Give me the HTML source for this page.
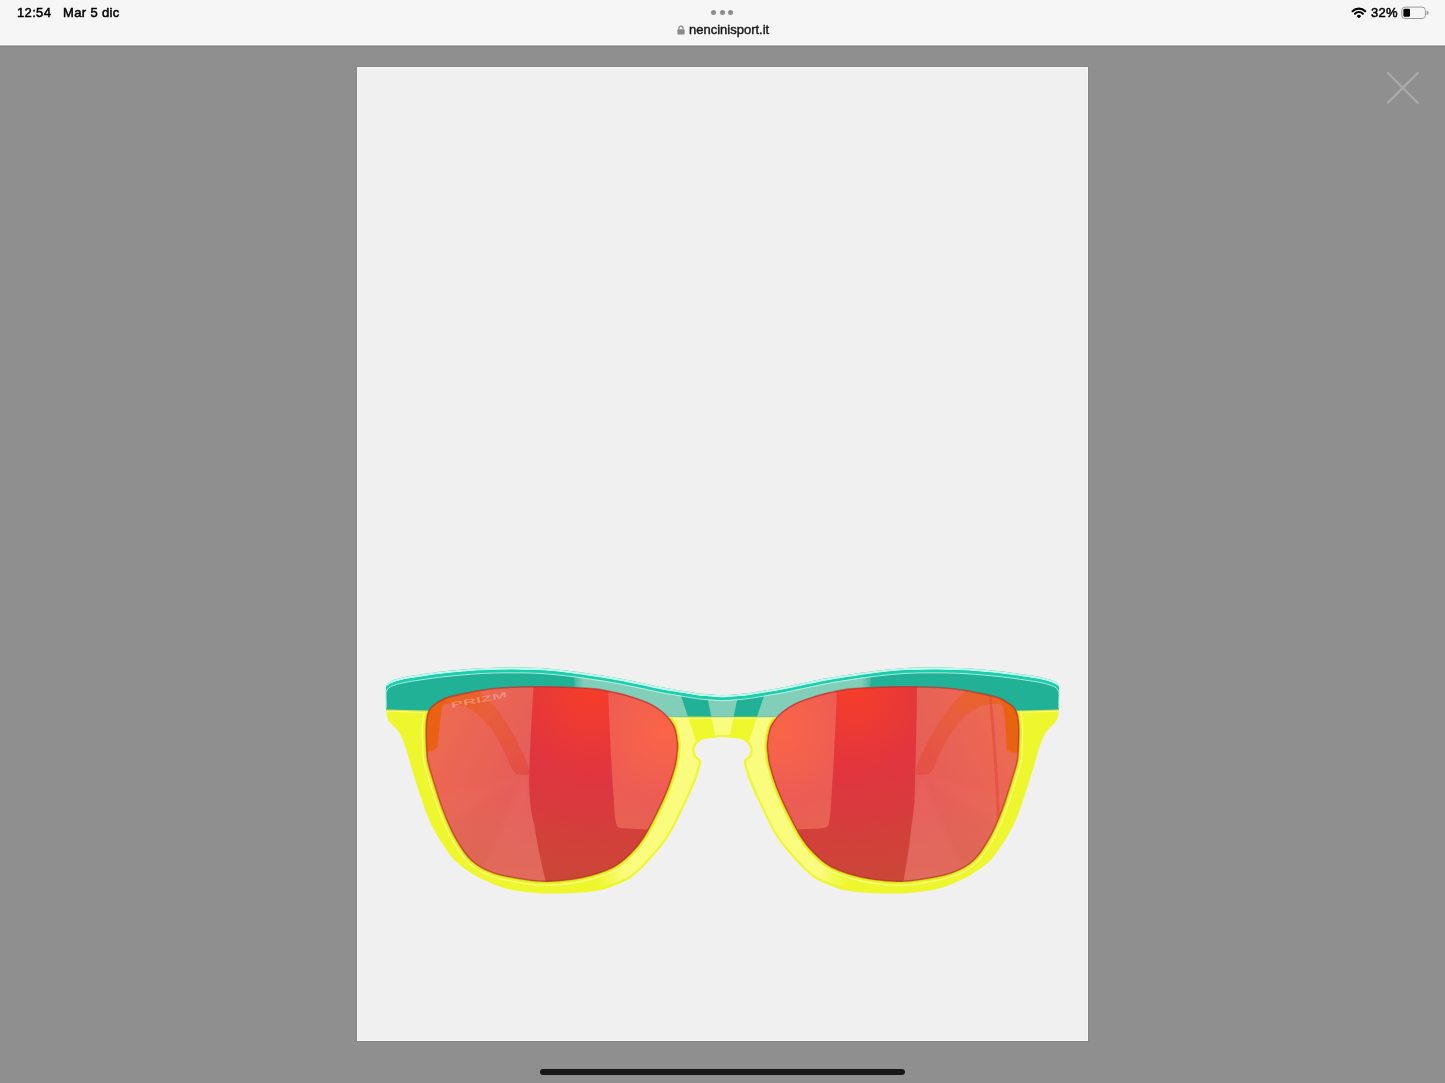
<!DOCTYPE html>
<html><head><meta charset="utf-8">
<style>
html,body{margin:0;padding:0;width:1445px;height:1083px;overflow:hidden;background:#8f8f8f;font-family:"Liberation Sans",sans-serif;}
.st,#url{will-change:transform;}
#bar{position:absolute;left:0;top:0;width:1445px;height:44px;background:#f6f6f6;border-bottom:1px solid #fdfdfd;}
#shadow{position:absolute;left:0;top:45px;width:1445px;height:2px;background:linear-gradient(#b4b4b4 0,#b4b4b4 50%,#838383 50%,#838383 100%);}
.st{position:absolute;top:5px;font-size:13px;color:#000;line-height:16px;letter-spacing:0.35px;-webkit-text-stroke:0.5px #000;}
#time{left:17px;}
#date{left:62.5px;}
#url{position:absolute;left:689px;top:22px;font-size:13px;color:#1a1a1a;line-height:16px;-webkit-text-stroke:0.4px #111;}
#dots{position:absolute;left:711px;top:10px;}
#dots i{position:absolute;top:0;width:5px;height:5px;border-radius:50%;background:#8d8d8d;}
#card{position:absolute;left:357px;top:67px;width:731px;height:974px;background:#f0f0f0;box-shadow:0 0 0 1px #878787, inset 0 0 0 1px #f6f6f6;}
#home{position:absolute;left:540px;top:1069px;width:365px;height:6px;border-radius:3px;background:#171717;}
</style></head><body>
<div id="bar"></div>
<div id="shadow"></div>
<div class="st" id="time">12:54</div>
<div class="st" id="date">Mar 5 dic</div>
<div id="dots"><i style="left:0"></i><i style="left:8.6px"></i><i style="left:17.2px"></i></div>
<svg width="8" height="10" style="position:absolute;left:677px;top:25px" viewBox="0 0 8 10"><path d="M1.9,4.6V3.2a2.1,2.1 0 0 1 4.2,0v1.4" fill="none" stroke="#8a8a8a" stroke-width="1.2"/><rect x="0.4" y="4.3" width="7.2" height="5.3" rx="0.9" fill="#8a8a8a"/></svg>
<div id="url">nencinisport.it</div>
<div class="st" id="pct" style="left:1371px;letter-spacing:0.3px">32%</div>
<svg width="1445" height="120" style="position:absolute;left:0;top:0" viewBox="0 0 1445 120">
  <path d="M1352.54,11.24 A9,9 0 0 1 1365.26,11.24" fill="none" stroke="#000" stroke-width="2.1" stroke-linecap="round"/>
 <path d="M1354.94,13.64 A5.6,5.6 0 0 1 1362.86,13.64" fill="none" stroke="#000" stroke-width="2.1" stroke-linecap="round"/>
 <path d="M1358.9,18 L1356.9,16 A2.8,2.8 0 0 1 1360.9,16Z" fill="#000" stroke="#000" stroke-width="0.6" stroke-linejoin="round"/>
 <rect x="1401.8" y="7.1" width="23.6" height="11.4" rx="3.2" fill="none" stroke="#9a9a9a" stroke-width="1"/>
 <rect x="1403.4" y="8.8" width="6.6" height="8" rx="1.4" fill="#000"/>
 <path d="M1426.6,10.8 A2,2 0 0 1 1426.6,15" fill="#a0a0a0"/>
 <path d="M1388,73 L1417.6,102.6 M1417.6,73 L1388,102.6" stroke="#aaaaaa" stroke-width="2.2" stroke-linecap="round"/>
</svg>
<div id="card"></div>
<svg width="1445" height="1083" viewBox="0 0 1445 1083" style="position:absolute;left:0;top:0">
<defs>
 <clipPath id="clL"><path d="M427.60,715.00 C428.45,711.43 429.30,709.90 431.30,707.60 C433.30,705.30 436.67,702.97 439.60,701.20 C442.53,699.43 444.28,698.38 448.90,697.00 C453.52,695.62 462.12,693.98 467.30,692.90 C472.48,691.82 474.55,691.32 480.00,690.50 C485.45,689.68 490.67,688.62 500.00,688.00 C509.33,687.38 525.17,686.93 536.00,686.80 C546.83,686.67 555.23,686.85 565.00,687.20 C574.77,687.55 586.27,688.00 594.60,688.90 C602.93,689.80 608.60,691.17 615.00,692.60 C621.40,694.03 627.17,695.60 633.00,697.50 C638.83,699.40 645.10,701.58 650.00,704.00 C654.90,706.42 659.07,709.33 662.40,712.00 C665.73,714.67 667.90,717.17 670.00,720.00 C672.10,722.83 673.75,725.00 675.00,729.00 C676.25,733.00 677.20,739.67 677.50,744.00 C677.80,748.33 677.22,751.33 676.80,755.00 C676.38,758.67 676.47,760.50 675.00,766.00 C673.53,771.50 671.00,780.25 668.00,788.00 C665.00,795.75 660.92,804.50 657.00,812.50 C653.08,820.50 648.67,829.42 644.50,836.00 C640.33,842.58 637.18,846.83 632.00,852.00 C626.82,857.17 621.73,862.75 613.40,867.00 C605.07,871.25 592.57,875.13 582.00,877.50 C571.43,879.87 558.92,880.78 550.00,881.20 C541.08,881.62 537.83,881.37 528.50,880.00 C519.17,878.63 503.47,876.25 494.00,873.00 C484.53,869.75 478.20,866.50 471.70,860.50 C465.20,854.50 459.85,845.58 455.00,837.00 C450.15,828.42 446.52,819.40 442.60,809.00 C438.68,798.60 434.00,782.77 431.50,774.60 C429.00,766.43 428.43,765.10 427.60,760.00 C426.77,754.90 426.73,749.17 426.50,744.00 C426.27,738.83 426.02,733.83 426.20,729.00 C426.38,724.17 426.75,718.57 427.60,715.00Z"/></clipPath>
 <clipPath id="clRR"><path d="M1017.40,715.00 C1016.55,711.43 1015.70,709.90 1013.70,707.60 C1011.70,705.30 1008.33,702.97 1005.40,701.20 C1002.47,699.43 1000.72,698.38 996.10,697.00 C991.48,695.62 982.88,693.98 977.70,692.90 C972.52,691.82 970.45,691.32 965.00,690.50 C959.55,689.68 954.33,688.62 945.00,688.00 C935.67,687.38 919.83,686.93 909.00,686.80 C898.17,686.67 889.77,686.85 880.00,687.20 C870.23,687.55 858.73,688.00 850.40,688.90 C842.07,689.80 836.40,691.17 830.00,692.60 C823.60,694.03 817.83,695.60 812.00,697.50 C806.17,699.40 799.90,701.58 795.00,704.00 C790.10,706.42 785.93,709.33 782.60,712.00 C779.27,714.67 777.10,717.17 775.00,720.00 C772.90,722.83 771.25,725.00 770.00,729.00 C768.75,733.00 767.80,739.67 767.50,744.00 C767.20,748.33 767.78,751.33 768.20,755.00 C768.62,758.67 768.53,760.50 770.00,766.00 C771.47,771.50 774.00,780.25 777.00,788.00 C780.00,795.75 784.08,804.50 788.00,812.50 C791.92,820.50 796.33,829.42 800.50,836.00 C804.67,842.58 807.82,846.83 813.00,852.00 C818.18,857.17 823.27,862.75 831.60,867.00 C839.93,871.25 852.43,875.13 863.00,877.50 C873.57,879.87 886.08,880.78 895.00,881.20 C903.92,881.62 907.17,881.37 916.50,880.00 C925.83,878.63 941.53,876.25 951.00,873.00 C960.47,869.75 966.80,866.50 973.30,860.50 C979.80,854.50 985.15,845.58 990.00,837.00 C994.85,828.42 998.48,819.40 1002.40,809.00 C1006.32,798.60 1011.00,782.77 1013.50,774.60 C1016.00,766.43 1016.57,765.10 1017.40,760.00 C1018.23,754.90 1018.27,749.17 1018.50,744.00 C1018.73,738.83 1018.98,733.83 1018.80,729.00 C1018.62,724.17 1018.25,718.57 1017.40,715.00Z"/></clipPath>
 <clipPath id="clY"><path d="M370,711 L668,718 L777,718 L1075,711 L1075,910 L370,910Z"/></clipPath>
 <clipPath id="clLow"><path d="M370,704 L668,711 L777,711 L1075,704 L1075,910 L370,910Z"/></clipPath>
 <clipPath id="clF"><path d="M386.00,686.50 C386.57,683.88 387.50,683.45 389.00,682.30 C390.50,681.15 392.33,680.48 395.00,679.60 C397.67,678.72 400.83,677.83 405.00,677.00 C409.17,676.17 413.33,675.57 420.00,674.60 C426.67,673.63 435.00,672.27 445.00,671.20 C455.00,670.13 469.17,668.83 480.00,668.20 C490.83,667.57 500.00,667.43 510.00,667.40 C520.00,667.37 530.00,667.42 540.00,668.00 C550.00,668.58 560.00,669.70 570.00,670.90 C580.00,672.10 591.67,673.92 600.00,675.20 C608.33,676.48 612.67,677.20 620.00,678.60 C627.33,680.00 637.33,682.20 644.00,683.60 C650.67,685.00 652.67,685.63 660.00,687.00 C667.33,688.37 681.33,690.70 688.00,691.80 C694.67,692.90 694.25,693.03 700.00,693.60 C705.75,694.17 715.00,695.20 722.50,695.20 C730.00,695.20 739.25,694.17 745.00,693.60 C750.75,693.03 750.33,692.90 757.00,691.80 C763.67,690.70 777.67,688.37 785.00,687.00 C792.33,685.63 794.33,685.00 801.00,683.60 C807.67,682.20 817.67,680.00 825.00,678.60 C832.33,677.20 836.67,676.48 845.00,675.20 C853.33,673.92 865.00,672.10 875.00,670.90 C885.00,669.70 895.00,668.58 905.00,668.00 C915.00,667.42 925.00,667.37 935.00,667.40 C945.00,667.43 954.17,667.57 965.00,668.20 C975.83,668.83 990.00,670.13 1000.00,671.20 C1010.00,672.27 1018.33,673.63 1025.00,674.60 C1031.67,675.57 1035.83,676.17 1040.00,677.00 C1044.17,677.83 1047.33,678.72 1050.00,679.60 C1052.67,680.48 1054.50,681.15 1056.00,682.30 C1057.50,683.45 1058.43,683.88 1059.00,686.50 C1059.57,689.12 1059.43,694.25 1059.40,698.00 C1059.37,701.75 1058.97,706.67 1058.80,709.00 C1058.63,711.33 1058.58,710.50 1058.40,712.00 C1058.22,713.50 1058.27,716.25 1057.70,718.00 C1057.13,719.75 1056.45,720.75 1055.00,722.50 C1053.55,724.25 1050.77,726.42 1049.00,728.50 C1047.23,730.58 1045.73,732.58 1044.40,735.00 C1043.07,737.42 1042.03,740.33 1041.00,743.00 C1039.97,745.67 1039.07,748.25 1038.20,751.00 C1037.33,753.75 1036.70,756.33 1035.80,759.50 C1034.90,762.67 1034.65,764.02 1032.80,770.00 C1030.95,775.98 1027.58,786.93 1024.70,795.40 C1021.82,803.87 1018.88,813.18 1015.50,820.80 C1012.12,828.42 1008.45,834.67 1004.40,841.10 C1000.35,847.53 995.93,854.32 991.20,859.40 C986.47,864.48 980.58,868.38 976.00,871.60 C971.42,874.82 969.70,875.93 963.70,878.70 C957.70,881.47 948.12,885.92 940.00,888.20 C931.88,890.48 923.33,891.50 915.00,892.40 C906.67,893.30 898.33,893.53 890.00,893.60 C881.67,893.67 872.50,893.35 865.00,892.80 C857.50,892.25 850.33,891.33 845.00,890.30 C839.67,889.27 838.33,888.82 833.00,886.60 C827.67,884.38 819.50,881.68 813.00,877.00 C806.50,872.32 800.25,865.50 794.00,858.50 C787.75,851.50 781.50,844.75 775.50,835.00 C769.50,825.25 762.42,809.17 758.00,800.00 C753.58,790.83 750.88,784.57 749.00,780.00 C747.12,775.43 747.45,774.93 746.70,772.60 C745.95,770.27 744.95,767.83 744.50,766.00 C744.05,764.17 743.88,762.72 744.00,761.60 C744.12,760.48 744.37,760.30 745.20,759.30 C746.03,758.30 748.13,756.88 749.00,755.60 C749.87,754.32 750.23,752.95 750.40,751.60 C750.57,750.25 750.62,749.07 750.00,747.50 C749.38,745.93 748.35,743.65 746.70,742.20 C745.05,740.75 743.52,739.63 740.10,738.80 C736.68,737.97 729.13,737.48 726.20,737.20 C723.27,736.92 723.73,737.10 722.50,737.10 C721.27,737.10 721.73,736.92 718.80,737.20 C715.87,737.48 708.32,737.97 704.90,738.80 C701.48,739.63 699.95,740.75 698.30,742.20 C696.65,743.65 695.62,745.93 695.00,747.50 C694.38,749.07 694.43,750.25 694.60,751.60 C694.77,752.95 695.13,754.32 696.00,755.60 C696.87,756.88 698.97,758.30 699.80,759.30 C700.63,760.30 700.88,760.48 701.00,761.60 C701.12,762.72 700.95,764.17 700.50,766.00 C700.05,767.83 699.05,770.27 698.30,772.60 C697.55,774.93 697.88,775.43 696.00,780.00 C694.12,784.57 691.42,790.83 687.00,800.00 C682.58,809.17 675.50,825.25 669.50,835.00 C663.50,844.75 657.25,851.50 651.00,858.50 C644.75,865.50 638.50,872.32 632.00,877.00 C625.50,881.68 617.33,884.38 612.00,886.60 C606.67,888.82 605.33,889.27 600.00,890.30 C594.67,891.33 587.50,892.25 580.00,892.80 C572.50,893.35 563.33,893.67 555.00,893.60 C546.67,893.53 538.33,893.30 530.00,892.40 C521.67,891.50 513.12,890.48 505.00,888.20 C496.88,885.92 487.30,881.47 481.30,878.70 C475.30,875.93 473.58,874.82 469.00,871.60 C464.42,868.38 458.53,864.48 453.80,859.40 C449.07,854.32 444.65,847.53 440.60,841.10 C436.55,834.67 432.88,828.42 429.50,820.80 C426.12,813.18 423.18,803.87 420.30,795.40 C417.42,786.93 414.05,775.98 412.20,770.00 C410.35,764.02 410.10,762.67 409.20,759.50 C408.30,756.33 407.67,753.75 406.80,751.00 C405.93,748.25 405.03,745.67 404.00,743.00 C402.97,740.33 401.93,737.42 400.60,735.00 C399.27,732.58 397.77,730.58 396.00,728.50 C394.23,726.42 391.45,724.25 390.00,722.50 C388.55,720.75 387.87,719.75 387.30,718.00 C386.73,716.25 386.78,713.50 386.60,712.00 C386.42,710.50 386.37,711.33 386.20,709.00 C386.03,706.67 385.63,701.75 385.60,698.00 C385.57,694.25 385.43,689.12 386.00,686.50Z"/></clipPath>
 <clipPath id="clB"><path d="M386.00,686.50 C386.50,685.80 387.50,683.45 389.00,682.30 C390.50,681.15 392.33,680.48 395.00,679.60 C397.67,678.72 400.83,677.83 405.00,677.00 C409.17,676.17 413.33,675.57 420.00,674.60 C426.67,673.63 435.00,672.27 445.00,671.20 C455.00,670.13 469.17,668.83 480.00,668.20 C490.83,667.57 500.00,667.43 510.00,667.40 C520.00,667.37 530.00,667.42 540.00,668.00 C550.00,668.58 560.00,669.70 570.00,670.90 C580.00,672.10 591.67,673.92 600.00,675.20 C608.33,676.48 612.67,677.20 620.00,678.60 C627.33,680.00 637.33,682.20 644.00,683.60 C650.67,685.00 652.67,685.63 660.00,687.00 C667.33,688.37 681.33,690.70 688.00,691.80 C694.67,692.90 694.25,693.03 700.00,693.60 C705.75,694.17 715.00,695.20 722.50,695.20 C730.00,695.20 739.25,694.17 745.00,693.60 C750.75,693.03 750.33,692.90 757.00,691.80 C763.67,690.70 777.67,688.37 785.00,687.00 C792.33,685.63 794.33,685.00 801.00,683.60 C807.67,682.20 817.67,680.00 825.00,678.60 C832.33,677.20 836.67,676.48 845.00,675.20 C853.33,673.92 865.00,672.10 875.00,670.90 C885.00,669.70 895.00,668.58 905.00,668.00 C915.00,667.42 925.00,667.37 935.00,667.40 C945.00,667.43 954.17,667.57 965.00,668.20 C975.83,668.83 990.00,670.13 1000.00,671.20 C1010.00,672.27 1018.33,673.63 1025.00,674.60 C1031.67,675.57 1035.83,676.17 1040.00,677.00 C1044.17,677.83 1047.33,678.72 1050.00,679.60 C1052.67,680.48 1054.50,681.15 1056.00,682.30 C1057.50,683.45 1058.50,685.80 1059.00,686.50 L1058.8,709.6 L777,716.6 L722.5,716.8 L668,716.6 L386.2,709.6Z"/></clipPath>
 <filter id="blur2" x="-20%" y="-20%" width="140%" height="140%"><feGaussianBlur stdDeviation="2.5"/></filter>
 <linearGradient id="gBase" gradientUnits="userSpaceOnUse" x1="430" y1="730" x2="545" y2="790">
  <stop offset="0" stop-color="#ed6b50"/><stop offset="1" stop-color="#e45a5b"/>
 </linearGradient>
 <linearGradient id="gBot" gradientUnits="userSpaceOnUse" x1="0" y1="790" x2="0" y2="885">
  <stop offset="0" stop-color="#da6e56" stop-opacity="0"/><stop offset="1" stop-color="#d86e55" stop-opacity="0.75"/>
 </linearGradient>
 <radialGradient id="gDark" gradientUnits="userSpaceOnUse" cx="592" cy="690" r="200">
  <stop offset="0" stop-color="#f63d2a"/><stop offset="0.45" stop-color="#df3540"/><stop offset="1" stop-color="#c94836"/>
 </radialGradient>
 <radialGradient id="gLight" gradientUnits="userSpaceOnUse" cx="665" cy="730" r="120">
  <stop offset="0" stop-color="#fa6547"/><stop offset="0.6" stop-color="#ec5c54"/><stop offset="1" stop-color="#e46452"/>
 </radialGradient>
 <linearGradient id="gTeal" gradientUnits="userSpaceOnUse" x1="570" y1="0" x2="584" y2="0">
  <stop offset="0" stop-color="#82cfb9" stop-opacity="0"/><stop offset="1" stop-color="#82cfb9"/>
 </linearGradient>
 <linearGradient id="gTealR" gradientUnits="userSpaceOnUse" x1="875" y1="0" x2="861" y2="0">
  <stop offset="0" stop-color="#82cfb9" stop-opacity="0"/><stop offset="1" stop-color="#82cfb9"/>
 </linearGradient>
 <linearGradient id="gTemple" gradientUnits="userSpaceOnUse" x1="460" y1="690" x2="525" y2="775">
  <stop offset="0" stop-color="#e8600c"/><stop offset="0.35" stop-color="#e85a30"/><stop offset="1" stop-color="#e0473f"/>
 </linearGradient>
 <linearGradient id="gLY" gradientUnits="userSpaceOnUse" x1="598" y1="0" x2="625" y2="0">
  <stop offset="0" stop-color="#f9fc7c" stop-opacity="0"/><stop offset="1" stop-color="#f9fc7c"/>
 </linearGradient>
</defs>
<path d="M386.00,686.50 C386.57,683.88 387.50,683.45 389.00,682.30 C390.50,681.15 392.33,680.48 395.00,679.60 C397.67,678.72 400.83,677.83 405.00,677.00 C409.17,676.17 413.33,675.57 420.00,674.60 C426.67,673.63 435.00,672.27 445.00,671.20 C455.00,670.13 469.17,668.83 480.00,668.20 C490.83,667.57 500.00,667.43 510.00,667.40 C520.00,667.37 530.00,667.42 540.00,668.00 C550.00,668.58 560.00,669.70 570.00,670.90 C580.00,672.10 591.67,673.92 600.00,675.20 C608.33,676.48 612.67,677.20 620.00,678.60 C627.33,680.00 637.33,682.20 644.00,683.60 C650.67,685.00 652.67,685.63 660.00,687.00 C667.33,688.37 681.33,690.70 688.00,691.80 C694.67,692.90 694.25,693.03 700.00,693.60 C705.75,694.17 715.00,695.20 722.50,695.20 C730.00,695.20 739.25,694.17 745.00,693.60 C750.75,693.03 750.33,692.90 757.00,691.80 C763.67,690.70 777.67,688.37 785.00,687.00 C792.33,685.63 794.33,685.00 801.00,683.60 C807.67,682.20 817.67,680.00 825.00,678.60 C832.33,677.20 836.67,676.48 845.00,675.20 C853.33,673.92 865.00,672.10 875.00,670.90 C885.00,669.70 895.00,668.58 905.00,668.00 C915.00,667.42 925.00,667.37 935.00,667.40 C945.00,667.43 954.17,667.57 965.00,668.20 C975.83,668.83 990.00,670.13 1000.00,671.20 C1010.00,672.27 1018.33,673.63 1025.00,674.60 C1031.67,675.57 1035.83,676.17 1040.00,677.00 C1044.17,677.83 1047.33,678.72 1050.00,679.60 C1052.67,680.48 1054.50,681.15 1056.00,682.30 C1057.50,683.45 1058.43,683.88 1059.00,686.50 C1059.57,689.12 1059.43,694.25 1059.40,698.00 C1059.37,701.75 1058.97,706.67 1058.80,709.00 C1058.63,711.33 1058.58,710.50 1058.40,712.00 C1058.22,713.50 1058.27,716.25 1057.70,718.00 C1057.13,719.75 1056.45,720.75 1055.00,722.50 C1053.55,724.25 1050.77,726.42 1049.00,728.50 C1047.23,730.58 1045.73,732.58 1044.40,735.00 C1043.07,737.42 1042.03,740.33 1041.00,743.00 C1039.97,745.67 1039.07,748.25 1038.20,751.00 C1037.33,753.75 1036.70,756.33 1035.80,759.50 C1034.90,762.67 1034.65,764.02 1032.80,770.00 C1030.95,775.98 1027.58,786.93 1024.70,795.40 C1021.82,803.87 1018.88,813.18 1015.50,820.80 C1012.12,828.42 1008.45,834.67 1004.40,841.10 C1000.35,847.53 995.93,854.32 991.20,859.40 C986.47,864.48 980.58,868.38 976.00,871.60 C971.42,874.82 969.70,875.93 963.70,878.70 C957.70,881.47 948.12,885.92 940.00,888.20 C931.88,890.48 923.33,891.50 915.00,892.40 C906.67,893.30 898.33,893.53 890.00,893.60 C881.67,893.67 872.50,893.35 865.00,892.80 C857.50,892.25 850.33,891.33 845.00,890.30 C839.67,889.27 838.33,888.82 833.00,886.60 C827.67,884.38 819.50,881.68 813.00,877.00 C806.50,872.32 800.25,865.50 794.00,858.50 C787.75,851.50 781.50,844.75 775.50,835.00 C769.50,825.25 762.42,809.17 758.00,800.00 C753.58,790.83 750.88,784.57 749.00,780.00 C747.12,775.43 747.45,774.93 746.70,772.60 C745.95,770.27 744.95,767.83 744.50,766.00 C744.05,764.17 743.88,762.72 744.00,761.60 C744.12,760.48 744.37,760.30 745.20,759.30 C746.03,758.30 748.13,756.88 749.00,755.60 C749.87,754.32 750.23,752.95 750.40,751.60 C750.57,750.25 750.62,749.07 750.00,747.50 C749.38,745.93 748.35,743.65 746.70,742.20 C745.05,740.75 743.52,739.63 740.10,738.80 C736.68,737.97 729.13,737.48 726.20,737.20 C723.27,736.92 723.73,737.10 722.50,737.10 C721.27,737.10 721.73,736.92 718.80,737.20 C715.87,737.48 708.32,737.97 704.90,738.80 C701.48,739.63 699.95,740.75 698.30,742.20 C696.65,743.65 695.62,745.93 695.00,747.50 C694.38,749.07 694.43,750.25 694.60,751.60 C694.77,752.95 695.13,754.32 696.00,755.60 C696.87,756.88 698.97,758.30 699.80,759.30 C700.63,760.30 700.88,760.48 701.00,761.60 C701.12,762.72 700.95,764.17 700.50,766.00 C700.05,767.83 699.05,770.27 698.30,772.60 C697.55,774.93 697.88,775.43 696.00,780.00 C694.12,784.57 691.42,790.83 687.00,800.00 C682.58,809.17 675.50,825.25 669.50,835.00 C663.50,844.75 657.25,851.50 651.00,858.50 C644.75,865.50 638.50,872.32 632.00,877.00 C625.50,881.68 617.33,884.38 612.00,886.60 C606.67,888.82 605.33,889.27 600.00,890.30 C594.67,891.33 587.50,892.25 580.00,892.80 C572.50,893.35 563.33,893.67 555.00,893.60 C546.67,893.53 538.33,893.30 530.00,892.40 C521.67,891.50 513.12,890.48 505.00,888.20 C496.88,885.92 487.30,881.47 481.30,878.70 C475.30,875.93 473.58,874.82 469.00,871.60 C464.42,868.38 458.53,864.48 453.80,859.40 C449.07,854.32 444.65,847.53 440.60,841.10 C436.55,834.67 432.88,828.42 429.50,820.80 C426.12,813.18 423.18,803.87 420.30,795.40 C417.42,786.93 414.05,775.98 412.20,770.00 C410.35,764.02 410.10,762.67 409.20,759.50 C408.30,756.33 407.67,753.75 406.80,751.00 C405.93,748.25 405.03,745.67 404.00,743.00 C402.97,740.33 401.93,737.42 400.60,735.00 C399.27,732.58 397.77,730.58 396.00,728.50 C394.23,726.42 391.45,724.25 390.00,722.50 C388.55,720.75 387.87,719.75 387.30,718.00 C386.73,716.25 386.78,713.50 386.60,712.00 C386.42,710.50 386.37,711.33 386.20,709.00 C386.03,706.67 385.63,701.75 385.60,698.00 C385.57,694.25 385.43,689.12 386.00,686.50Z" fill="#eef72e" clip-path="url(#clLow)"/>
<g clip-path="url(#clF)">
 <path d="M668,716.6 C674,722 677,732 677.5,744 C678,760 670,790 657,812.5 C648,830 636,850 613.4,867 C605,872 597,876 590,878 L592,889 C594.83,888.25 602.53,886.78 609.00,884.50 C615.47,882.22 624.05,879.88 630.80,875.30 C637.55,870.72 643.35,863.88 649.50,857.00 C655.65,850.12 661.75,843.63 667.70,834.00 C673.65,824.37 680.82,808.37 685.20,799.20 C689.58,790.03 692.15,783.53 694.00,779.00 C695.85,774.47 695.58,774.17 696.30,772.00 C697.02,769.83 697.90,767.67 698.30,766.00 C698.70,764.33 698.82,762.97 698.70,762.00 C698.58,761.03 698.42,761.10 697.60,760.20 C696.78,759.30 694.67,758.03 693.80,756.60 C692.93,755.17 692.57,753.20 692.40,751.60 C692.23,750.00 692.10,748.85 692.80,747.00 C693.50,745.15 694.65,742.23 696.60,740.50 C698.55,738.77 700.80,737.50 704.50,736.60 C708.20,735.70 715.63,735.37 718.80,735.10 C721.97,734.83 722.72,735.02 723.50,735.00 L723.5,716.8Z" fill="url(#gLY)"/>
 <g transform="translate(1445,0) scale(-1,1)"><path d="M668,716.6 C674,722 677,732 677.5,744 C678,760 670,790 657,812.5 C648,830 636,850 613.4,867 C605,872 597,876 590,878 L592,889 C594.83,888.25 602.53,886.78 609.00,884.50 C615.47,882.22 624.05,879.88 630.80,875.30 C637.55,870.72 643.35,863.88 649.50,857.00 C655.65,850.12 661.75,843.63 667.70,834.00 C673.65,824.37 680.82,808.37 685.20,799.20 C689.58,790.03 692.15,783.53 694.00,779.00 C695.85,774.47 695.58,774.17 696.30,772.00 C697.02,769.83 697.90,767.67 698.30,766.00 C698.70,764.33 698.82,762.97 698.70,762.00 C698.58,761.03 698.42,761.10 697.60,760.20 C696.78,759.30 694.67,758.03 693.80,756.60 C692.93,755.17 692.57,753.20 692.40,751.60 C692.23,750.00 692.10,748.85 692.80,747.00 C693.50,745.15 694.65,742.23 696.60,740.50 C698.55,738.77 700.80,737.50 704.50,736.60 C708.20,735.70 715.63,735.37 718.80,735.10 C721.97,734.83 722.72,735.02 723.50,735.00 L723.5,716.8Z" fill="url(#gLY)"/></g>
 <path d="M675.67,680.00 L703.71,680.00 L717.16,745.00 L697.32,745.00Z" fill="#eef82c"/>
 <path d="M769.33,680.00 L741.29,680.00 L727.84,745.00 L747.68,745.00Z" fill="#eef82c"/>
 <path d="M380,711 L668,718.2 L777,718.2 L1065,711" fill="none" stroke="#fafcb0" stroke-width="1.2" stroke-opacity="0.8"/>
 <path d="M380,710 L668,717.2 L777,717.2 L1065,710" fill="none" stroke="#c8d030" stroke-width="1.2" stroke-opacity="0.5"/>
</g>
<path d="M386.00,686.50 C386.50,685.80 387.50,683.45 389.00,682.30 C390.50,681.15 392.33,680.48 395.00,679.60 C397.67,678.72 400.83,677.83 405.00,677.00 C409.17,676.17 413.33,675.57 420.00,674.60 C426.67,673.63 435.00,672.27 445.00,671.20 C455.00,670.13 469.17,668.83 480.00,668.20 C490.83,667.57 500.00,667.43 510.00,667.40 C520.00,667.37 530.00,667.42 540.00,668.00 C550.00,668.58 560.00,669.70 570.00,670.90 C580.00,672.10 591.67,673.92 600.00,675.20 C608.33,676.48 612.67,677.20 620.00,678.60 C627.33,680.00 637.33,682.20 644.00,683.60 C650.67,685.00 652.67,685.63 660.00,687.00 C667.33,688.37 681.33,690.70 688.00,691.80 C694.67,692.90 694.25,693.03 700.00,693.60 C705.75,694.17 715.00,695.20 722.50,695.20 C730.00,695.20 739.25,694.17 745.00,693.60 C750.75,693.03 750.33,692.90 757.00,691.80 C763.67,690.70 777.67,688.37 785.00,687.00 C792.33,685.63 794.33,685.00 801.00,683.60 C807.67,682.20 817.67,680.00 825.00,678.60 C832.33,677.20 836.67,676.48 845.00,675.20 C853.33,673.92 865.00,672.10 875.00,670.90 C885.00,669.70 895.00,668.58 905.00,668.00 C915.00,667.42 925.00,667.37 935.00,667.40 C945.00,667.43 954.17,667.57 965.00,668.20 C975.83,668.83 990.00,670.13 1000.00,671.20 C1010.00,672.27 1018.33,673.63 1025.00,674.60 C1031.67,675.57 1035.83,676.17 1040.00,677.00 C1044.17,677.83 1047.33,678.72 1050.00,679.60 C1052.67,680.48 1054.50,681.15 1056.00,682.30 C1057.50,683.45 1058.50,685.80 1059.00,686.50 L1058.8,709.6 L777,716.6 L722.5,716.8 L668,716.6 L386.2,709.6Z" fill="#21b197"/>
<g clip-path="url(#clB)">
 <path d="M570,650 L665.7,650 L690.7,725 L580,725Z" fill="url(#gTeal)"/>
 <path d="M875,650 L779.3,650 L754.3,725 L865,725Z" fill="url(#gTealR)"/>
 <path d="M697.5,650 L747.5,650 L731.9,725 L713.1,725Z" fill="#82cfb9"/>
 <path d="M386.00,686.50 C386.50,685.80 387.50,683.45 389.00,682.30 C390.50,681.15 392.33,680.48 395.00,679.60 C397.67,678.72 400.83,677.83 405.00,677.00 C409.17,676.17 413.33,675.57 420.00,674.60 C426.67,673.63 435.00,672.27 445.00,671.20 C455.00,670.13 469.17,668.83 480.00,668.20 C490.83,667.57 500.00,667.43 510.00,667.40 C520.00,667.37 530.00,667.42 540.00,668.00 C550.00,668.58 560.00,669.70 570.00,670.90 C580.00,672.10 591.67,673.92 600.00,675.20 C608.33,676.48 612.67,677.20 620.00,678.60 C627.33,680.00 637.33,682.20 644.00,683.60 C650.67,685.00 652.67,685.63 660.00,687.00 C667.33,688.37 681.33,690.70 688.00,691.80 C694.67,692.90 694.25,693.03 700.00,693.60 C705.75,694.17 715.00,695.20 722.50,695.20 C730.00,695.20 739.25,694.17 745.00,693.60 C750.75,693.03 750.33,692.90 757.00,691.80 C763.67,690.70 777.67,688.37 785.00,687.00 C792.33,685.63 794.33,685.00 801.00,683.60 C807.67,682.20 817.67,680.00 825.00,678.60 C832.33,677.20 836.67,676.48 845.00,675.20 C853.33,673.92 865.00,672.10 875.00,670.90 C885.00,669.70 895.00,668.58 905.00,668.00 C915.00,667.42 925.00,667.37 935.00,667.40 C945.00,667.43 954.17,667.57 965.00,668.20 C975.83,668.83 990.00,670.13 1000.00,671.20 C1010.00,672.27 1018.33,673.63 1025.00,674.60 C1031.67,675.57 1035.83,676.17 1040.00,677.00 C1044.17,677.83 1047.33,678.72 1050.00,679.60 C1052.67,680.48 1054.50,681.15 1056.00,682.30 C1057.50,683.45 1058.50,685.80 1059.00,686.50" fill="none" stroke="#c2faec" stroke-width="5" transform="translate(0,-0.2)"/>
 <path d="M386.00,686.50 C386.50,685.80 387.50,683.45 389.00,682.30 C390.50,681.15 392.33,680.48 395.00,679.60 C397.67,678.72 400.83,677.83 405.00,677.00 C409.17,676.17 413.33,675.57 420.00,674.60 C426.67,673.63 435.00,672.27 445.00,671.20 C455.00,670.13 469.17,668.83 480.00,668.20 C490.83,667.57 500.00,667.43 510.00,667.40 C520.00,667.37 530.00,667.42 540.00,668.00 C550.00,668.58 560.00,669.70 570.00,670.90 C580.00,672.10 591.67,673.92 600.00,675.20 C608.33,676.48 612.67,677.20 620.00,678.60 C627.33,680.00 637.33,682.20 644.00,683.60 C650.67,685.00 652.67,685.63 660.00,687.00 C667.33,688.37 681.33,690.70 688.00,691.80 C694.67,692.90 694.25,693.03 700.00,693.60 C705.75,694.17 715.00,695.20 722.50,695.20 C730.00,695.20 739.25,694.17 745.00,693.60 C750.75,693.03 750.33,692.90 757.00,691.80 C763.67,690.70 777.67,688.37 785.00,687.00 C792.33,685.63 794.33,685.00 801.00,683.60 C807.67,682.20 817.67,680.00 825.00,678.60 C832.33,677.20 836.67,676.48 845.00,675.20 C853.33,673.92 865.00,672.10 875.00,670.90 C885.00,669.70 895.00,668.58 905.00,668.00 C915.00,667.42 925.00,667.37 935.00,667.40 C945.00,667.43 954.17,667.57 965.00,668.20 C975.83,668.83 990.00,670.13 1000.00,671.20 C1010.00,672.27 1018.33,673.63 1025.00,674.60 C1031.67,675.57 1035.83,676.17 1040.00,677.00 C1044.17,677.83 1047.33,678.72 1050.00,679.60 C1052.67,680.48 1054.50,681.15 1056.00,682.30 C1057.50,683.45 1058.50,685.80 1059.00,686.50" fill="none" stroke="#18cfb0" stroke-width="2.6" transform="translate(0,3.6)"/>
 <path d="M386.00,686.50 C386.50,685.80 387.50,683.45 389.00,682.30 C390.50,681.15 392.33,680.48 395.00,679.60 C397.67,678.72 400.83,677.83 405.00,677.00 C409.17,676.17 413.33,675.57 420.00,674.60 C426.67,673.63 435.00,672.27 445.00,671.20 C455.00,670.13 469.17,668.83 480.00,668.20 C490.83,667.57 500.00,667.43 510.00,667.40 C520.00,667.37 530.00,667.42 540.00,668.00 C550.00,668.58 560.00,669.70 570.00,670.90 C580.00,672.10 591.67,673.92 600.00,675.20 C608.33,676.48 612.67,677.20 620.00,678.60 C627.33,680.00 637.33,682.20 644.00,683.60 C650.67,685.00 652.67,685.63 660.00,687.00 C667.33,688.37 681.33,690.70 688.00,691.80 C694.67,692.90 694.25,693.03 700.00,693.60 C705.75,694.17 715.00,695.20 722.50,695.20 C730.00,695.20 739.25,694.17 745.00,693.60 C750.75,693.03 750.33,692.90 757.00,691.80 C763.67,690.70 777.67,688.37 785.00,687.00 C792.33,685.63 794.33,685.00 801.00,683.60 C807.67,682.20 817.67,680.00 825.00,678.60 C832.33,677.20 836.67,676.48 845.00,675.20 C853.33,673.92 865.00,672.10 875.00,670.90 C885.00,669.70 895.00,668.58 905.00,668.00 C915.00,667.42 925.00,667.37 935.00,667.40 C945.00,667.43 954.17,667.57 965.00,668.20 C975.83,668.83 990.00,670.13 1000.00,671.20 C1010.00,672.27 1018.33,673.63 1025.00,674.60 C1031.67,675.57 1035.83,676.17 1040.00,677.00 C1044.17,677.83 1047.33,678.72 1050.00,679.60 C1052.67,680.48 1054.50,681.15 1056.00,682.30 C1057.50,683.45 1058.50,685.80 1059.00,686.50" fill="none" stroke="#c8f5ea" stroke-width="1" stroke-opacity="0.85" transform="translate(0,5.4)"/>
</g>
<g clip-path="url(#clF)"><g clip-path="url(#clY)">
 <path d="M427.60,715.00 C428.45,711.43 429.30,709.90 431.30,707.60 C433.30,705.30 436.67,702.97 439.60,701.20 C442.53,699.43 444.28,698.38 448.90,697.00 C453.52,695.62 462.12,693.98 467.30,692.90 C472.48,691.82 474.55,691.32 480.00,690.50 C485.45,689.68 490.67,688.62 500.00,688.00 C509.33,687.38 525.17,686.93 536.00,686.80 C546.83,686.67 555.23,686.85 565.00,687.20 C574.77,687.55 586.27,688.00 594.60,688.90 C602.93,689.80 608.60,691.17 615.00,692.60 C621.40,694.03 627.17,695.60 633.00,697.50 C638.83,699.40 645.10,701.58 650.00,704.00 C654.90,706.42 659.07,709.33 662.40,712.00 C665.73,714.67 667.90,717.17 670.00,720.00 C672.10,722.83 673.75,725.00 675.00,729.00 C676.25,733.00 677.20,739.67 677.50,744.00 C677.80,748.33 677.22,751.33 676.80,755.00 C676.38,758.67 676.47,760.50 675.00,766.00 C673.53,771.50 671.00,780.25 668.00,788.00 C665.00,795.75 660.92,804.50 657.00,812.50 C653.08,820.50 648.67,829.42 644.50,836.00 C640.33,842.58 637.18,846.83 632.00,852.00 C626.82,857.17 621.73,862.75 613.40,867.00 C605.07,871.25 592.57,875.13 582.00,877.50 C571.43,879.87 558.92,880.78 550.00,881.20 C541.08,881.62 537.83,881.37 528.50,880.00 C519.17,878.63 503.47,876.25 494.00,873.00 C484.53,869.75 478.20,866.50 471.70,860.50 C465.20,854.50 459.85,845.58 455.00,837.00 C450.15,828.42 446.52,819.40 442.60,809.00 C438.68,798.60 434.00,782.77 431.50,774.60 C429.00,766.43 428.43,765.10 427.60,760.00 C426.77,754.90 426.73,749.17 426.50,744.00 C426.27,738.83 426.02,733.83 426.20,729.00 C426.38,724.17 426.75,718.57 427.60,715.00Z" fill="none" stroke="#fbfd9c" stroke-width="9" stroke-opacity="0.75"/>
 <path d="M427.60,715.00 C428.45,711.43 429.30,709.90 431.30,707.60 C433.30,705.30 436.67,702.97 439.60,701.20 C442.53,699.43 444.28,698.38 448.90,697.00 C453.52,695.62 462.12,693.98 467.30,692.90 C472.48,691.82 474.55,691.32 480.00,690.50 C485.45,689.68 490.67,688.62 500.00,688.00 C509.33,687.38 525.17,686.93 536.00,686.80 C546.83,686.67 555.23,686.85 565.00,687.20 C574.77,687.55 586.27,688.00 594.60,688.90 C602.93,689.80 608.60,691.17 615.00,692.60 C621.40,694.03 627.17,695.60 633.00,697.50 C638.83,699.40 645.10,701.58 650.00,704.00 C654.90,706.42 659.07,709.33 662.40,712.00 C665.73,714.67 667.90,717.17 670.00,720.00 C672.10,722.83 673.75,725.00 675.00,729.00 C676.25,733.00 677.20,739.67 677.50,744.00 C677.80,748.33 677.22,751.33 676.80,755.00 C676.38,758.67 676.47,760.50 675.00,766.00 C673.53,771.50 671.00,780.25 668.00,788.00 C665.00,795.75 660.92,804.50 657.00,812.50 C653.08,820.50 648.67,829.42 644.50,836.00 C640.33,842.58 637.18,846.83 632.00,852.00 C626.82,857.17 621.73,862.75 613.40,867.00 C605.07,871.25 592.57,875.13 582.00,877.50 C571.43,879.87 558.92,880.78 550.00,881.20 C541.08,881.62 537.83,881.37 528.50,880.00 C519.17,878.63 503.47,876.25 494.00,873.00 C484.53,869.75 478.20,866.50 471.70,860.50 C465.20,854.50 459.85,845.58 455.00,837.00 C450.15,828.42 446.52,819.40 442.60,809.00 C438.68,798.60 434.00,782.77 431.50,774.60 C429.00,766.43 428.43,765.10 427.60,760.00 C426.77,754.90 426.73,749.17 426.50,744.00 C426.27,738.83 426.02,733.83 426.20,729.00 C426.38,724.17 426.75,718.57 427.60,715.00Z" fill="none" stroke="#e9f526" stroke-width="6.4"/>
 <path d="M427.60,715.00 C428.45,711.43 429.30,709.90 431.30,707.60 C433.30,705.30 436.67,702.97 439.60,701.20 C442.53,699.43 444.28,698.38 448.90,697.00 C453.52,695.62 462.12,693.98 467.30,692.90 C472.48,691.82 474.55,691.32 480.00,690.50 C485.45,689.68 490.67,688.62 500.00,688.00 C509.33,687.38 525.17,686.93 536.00,686.80 C546.83,686.67 555.23,686.85 565.00,687.20 C574.77,687.55 586.27,688.00 594.60,688.90 C602.93,689.80 608.60,691.17 615.00,692.60 C621.40,694.03 627.17,695.60 633.00,697.50 C638.83,699.40 645.10,701.58 650.00,704.00 C654.90,706.42 659.07,709.33 662.40,712.00 C665.73,714.67 667.90,717.17 670.00,720.00 C672.10,722.83 673.75,725.00 675.00,729.00 C676.25,733.00 677.20,739.67 677.50,744.00 C677.80,748.33 677.22,751.33 676.80,755.00 C676.38,758.67 676.47,760.50 675.00,766.00 C673.53,771.50 671.00,780.25 668.00,788.00 C665.00,795.75 660.92,804.50 657.00,812.50 C653.08,820.50 648.67,829.42 644.50,836.00 C640.33,842.58 637.18,846.83 632.00,852.00 C626.82,857.17 621.73,862.75 613.40,867.00 C605.07,871.25 592.57,875.13 582.00,877.50 C571.43,879.87 558.92,880.78 550.00,881.20 C541.08,881.62 537.83,881.37 528.50,880.00 C519.17,878.63 503.47,876.25 494.00,873.00 C484.53,869.75 478.20,866.50 471.70,860.50 C465.20,854.50 459.85,845.58 455.00,837.00 C450.15,828.42 446.52,819.40 442.60,809.00 C438.68,798.60 434.00,782.77 431.50,774.60 C429.00,766.43 428.43,765.10 427.60,760.00 C426.77,754.90 426.73,749.17 426.50,744.00 C426.27,738.83 426.02,733.83 426.20,729.00 C426.38,724.17 426.75,718.57 427.60,715.00Z" fill="none" stroke="#d8e415" stroke-width="3.6" stroke-opacity="0.8"/>
 <g transform="translate(1445,0) scale(-1,1)">
 <path d="M427.60,715.00 C428.45,711.43 429.30,709.90 431.30,707.60 C433.30,705.30 436.67,702.97 439.60,701.20 C442.53,699.43 444.28,698.38 448.90,697.00 C453.52,695.62 462.12,693.98 467.30,692.90 C472.48,691.82 474.55,691.32 480.00,690.50 C485.45,689.68 490.67,688.62 500.00,688.00 C509.33,687.38 525.17,686.93 536.00,686.80 C546.83,686.67 555.23,686.85 565.00,687.20 C574.77,687.55 586.27,688.00 594.60,688.90 C602.93,689.80 608.60,691.17 615.00,692.60 C621.40,694.03 627.17,695.60 633.00,697.50 C638.83,699.40 645.10,701.58 650.00,704.00 C654.90,706.42 659.07,709.33 662.40,712.00 C665.73,714.67 667.90,717.17 670.00,720.00 C672.10,722.83 673.75,725.00 675.00,729.00 C676.25,733.00 677.20,739.67 677.50,744.00 C677.80,748.33 677.22,751.33 676.80,755.00 C676.38,758.67 676.47,760.50 675.00,766.00 C673.53,771.50 671.00,780.25 668.00,788.00 C665.00,795.75 660.92,804.50 657.00,812.50 C653.08,820.50 648.67,829.42 644.50,836.00 C640.33,842.58 637.18,846.83 632.00,852.00 C626.82,857.17 621.73,862.75 613.40,867.00 C605.07,871.25 592.57,875.13 582.00,877.50 C571.43,879.87 558.92,880.78 550.00,881.20 C541.08,881.62 537.83,881.37 528.50,880.00 C519.17,878.63 503.47,876.25 494.00,873.00 C484.53,869.75 478.20,866.50 471.70,860.50 C465.20,854.50 459.85,845.58 455.00,837.00 C450.15,828.42 446.52,819.40 442.60,809.00 C438.68,798.60 434.00,782.77 431.50,774.60 C429.00,766.43 428.43,765.10 427.60,760.00 C426.77,754.90 426.73,749.17 426.50,744.00 C426.27,738.83 426.02,733.83 426.20,729.00 C426.38,724.17 426.75,718.57 427.60,715.00Z" fill="none" stroke="#fbfd9c" stroke-width="9" stroke-opacity="0.75"/>
 <path d="M427.60,715.00 C428.45,711.43 429.30,709.90 431.30,707.60 C433.30,705.30 436.67,702.97 439.60,701.20 C442.53,699.43 444.28,698.38 448.90,697.00 C453.52,695.62 462.12,693.98 467.30,692.90 C472.48,691.82 474.55,691.32 480.00,690.50 C485.45,689.68 490.67,688.62 500.00,688.00 C509.33,687.38 525.17,686.93 536.00,686.80 C546.83,686.67 555.23,686.85 565.00,687.20 C574.77,687.55 586.27,688.00 594.60,688.90 C602.93,689.80 608.60,691.17 615.00,692.60 C621.40,694.03 627.17,695.60 633.00,697.50 C638.83,699.40 645.10,701.58 650.00,704.00 C654.90,706.42 659.07,709.33 662.40,712.00 C665.73,714.67 667.90,717.17 670.00,720.00 C672.10,722.83 673.75,725.00 675.00,729.00 C676.25,733.00 677.20,739.67 677.50,744.00 C677.80,748.33 677.22,751.33 676.80,755.00 C676.38,758.67 676.47,760.50 675.00,766.00 C673.53,771.50 671.00,780.25 668.00,788.00 C665.00,795.75 660.92,804.50 657.00,812.50 C653.08,820.50 648.67,829.42 644.50,836.00 C640.33,842.58 637.18,846.83 632.00,852.00 C626.82,857.17 621.73,862.75 613.40,867.00 C605.07,871.25 592.57,875.13 582.00,877.50 C571.43,879.87 558.92,880.78 550.00,881.20 C541.08,881.62 537.83,881.37 528.50,880.00 C519.17,878.63 503.47,876.25 494.00,873.00 C484.53,869.75 478.20,866.50 471.70,860.50 C465.20,854.50 459.85,845.58 455.00,837.00 C450.15,828.42 446.52,819.40 442.60,809.00 C438.68,798.60 434.00,782.77 431.50,774.60 C429.00,766.43 428.43,765.10 427.60,760.00 C426.77,754.90 426.73,749.17 426.50,744.00 C426.27,738.83 426.02,733.83 426.20,729.00 C426.38,724.17 426.75,718.57 427.60,715.00Z" fill="none" stroke="#e9f526" stroke-width="6.4"/>
 <path d="M427.60,715.00 C428.45,711.43 429.30,709.90 431.30,707.60 C433.30,705.30 436.67,702.97 439.60,701.20 C442.53,699.43 444.28,698.38 448.90,697.00 C453.52,695.62 462.12,693.98 467.30,692.90 C472.48,691.82 474.55,691.32 480.00,690.50 C485.45,689.68 490.67,688.62 500.00,688.00 C509.33,687.38 525.17,686.93 536.00,686.80 C546.83,686.67 555.23,686.85 565.00,687.20 C574.77,687.55 586.27,688.00 594.60,688.90 C602.93,689.80 608.60,691.17 615.00,692.60 C621.40,694.03 627.17,695.60 633.00,697.50 C638.83,699.40 645.10,701.58 650.00,704.00 C654.90,706.42 659.07,709.33 662.40,712.00 C665.73,714.67 667.90,717.17 670.00,720.00 C672.10,722.83 673.75,725.00 675.00,729.00 C676.25,733.00 677.20,739.67 677.50,744.00 C677.80,748.33 677.22,751.33 676.80,755.00 C676.38,758.67 676.47,760.50 675.00,766.00 C673.53,771.50 671.00,780.25 668.00,788.00 C665.00,795.75 660.92,804.50 657.00,812.50 C653.08,820.50 648.67,829.42 644.50,836.00 C640.33,842.58 637.18,846.83 632.00,852.00 C626.82,857.17 621.73,862.75 613.40,867.00 C605.07,871.25 592.57,875.13 582.00,877.50 C571.43,879.87 558.92,880.78 550.00,881.20 C541.08,881.62 537.83,881.37 528.50,880.00 C519.17,878.63 503.47,876.25 494.00,873.00 C484.53,869.75 478.20,866.50 471.70,860.50 C465.20,854.50 459.85,845.58 455.00,837.00 C450.15,828.42 446.52,819.40 442.60,809.00 C438.68,798.60 434.00,782.77 431.50,774.60 C429.00,766.43 428.43,765.10 427.60,760.00 C426.77,754.90 426.73,749.17 426.50,744.00 C426.27,738.83 426.02,733.83 426.20,729.00 C426.38,724.17 426.75,718.57 427.60,715.00Z" fill="none" stroke="#d8e415" stroke-width="3.6" stroke-opacity="0.8"/>
 </g>
</g></g>
<g>
 <path d="M427.60,715.00 C428.45,711.43 429.30,709.90 431.30,707.60 C433.30,705.30 436.67,702.97 439.60,701.20 C442.53,699.43 444.28,698.38 448.90,697.00 C453.52,695.62 462.12,693.98 467.30,692.90 C472.48,691.82 474.55,691.32 480.00,690.50 C485.45,689.68 490.67,688.62 500.00,688.00 C509.33,687.38 525.17,686.93 536.00,686.80 C546.83,686.67 555.23,686.85 565.00,687.20 C574.77,687.55 586.27,688.00 594.60,688.90 C602.93,689.80 608.60,691.17 615.00,692.60 C621.40,694.03 627.17,695.60 633.00,697.50 C638.83,699.40 645.10,701.58 650.00,704.00 C654.90,706.42 659.07,709.33 662.40,712.00 C665.73,714.67 667.90,717.17 670.00,720.00 C672.10,722.83 673.75,725.00 675.00,729.00 C676.25,733.00 677.20,739.67 677.50,744.00 C677.80,748.33 677.22,751.33 676.80,755.00 C676.38,758.67 676.47,760.50 675.00,766.00 C673.53,771.50 671.00,780.25 668.00,788.00 C665.00,795.75 660.92,804.50 657.00,812.50 C653.08,820.50 648.67,829.42 644.50,836.00 C640.33,842.58 637.18,846.83 632.00,852.00 C626.82,857.17 621.73,862.75 613.40,867.00 C605.07,871.25 592.57,875.13 582.00,877.50 C571.43,879.87 558.92,880.78 550.00,881.20 C541.08,881.62 537.83,881.37 528.50,880.00 C519.17,878.63 503.47,876.25 494.00,873.00 C484.53,869.75 478.20,866.50 471.70,860.50 C465.20,854.50 459.85,845.58 455.00,837.00 C450.15,828.42 446.52,819.40 442.60,809.00 C438.68,798.60 434.00,782.77 431.50,774.60 C429.00,766.43 428.43,765.10 427.60,760.00 C426.77,754.90 426.73,749.17 426.50,744.00 C426.27,738.83 426.02,733.83 426.20,729.00 C426.38,724.17 426.75,718.57 427.60,715.00Z" fill="url(#gBase)"/>
 <g clip-path="url(#clL)">
  <rect x="420" y="780" width="130" height="110" fill="url(#gBot)"/>
  <path d="M524,776 L470,900 L552,900Z" fill="#f07a70" fill-opacity="0.16" filter="url(#blur2)"/>
  <path d="M524,776 L420,800 L420,840Z" fill="#f07a70" fill-opacity="0.08" filter="url(#blur2)"/>
  <path d="M534,680 C532,710 530,745 529,780 C529.5,800 531,815 534.5,825 C537,845 541,862 548,890 L700,890 L700,680Z" fill="url(#gDark)"/>
  <path d="M608,684 C609,720 611.5,770 613.7,798 C614.5,812 615,822 617.3,826.5 C619,828 622,828.2 626,828.4 L649,829.6 L700,833 L700,684Z" fill="url(#gLight)"/>
  <path d="M420,690 L476.7,688 C482,694 490,700 496,708 C505,719 513,733 519,745 C524,755 528,764 529.5,772 C529.5,774 528,775 526,775 L517,774 C514.5,773.5 512,770 510,765 C506,755 501,745 495,735 C488,724 478,713 467,707.5 C459,703.5 450,703 443,705 C440.5,712 439.5,730 437.5,746 C436.5,749.5 433,751 428,751.5 L420,752Z" fill="url(#gTemple)" fill-opacity="0.68"/>
  <path d="M420,690 L452,690 C449,697 446,702 443,705 C440.5,712 439.5,730 437.5,746 C436.5,749.5 433,751 428,751.5 L420,752Z" fill="#e8620e" fill-opacity="0.75"/>
 </g>
 <path d="M427.60,715.00 C428.45,711.43 429.30,709.90 431.30,707.60 C433.30,705.30 436.67,702.97 439.60,701.20 C442.53,699.43 444.28,698.38 448.90,697.00 C453.52,695.62 462.12,693.98 467.30,692.90 C472.48,691.82 474.55,691.32 480.00,690.50 C485.45,689.68 490.67,688.62 500.00,688.00 C509.33,687.38 525.17,686.93 536.00,686.80 C546.83,686.67 555.23,686.85 565.00,687.20 C574.77,687.55 586.27,688.00 594.60,688.90 C602.93,689.80 608.60,691.17 615.00,692.60 C621.40,694.03 627.17,695.60 633.00,697.50 C638.83,699.40 645.10,701.58 650.00,704.00 C654.90,706.42 659.07,709.33 662.40,712.00 C665.73,714.67 667.90,717.17 670.00,720.00 C672.10,722.83 673.75,725.00 675.00,729.00 C676.25,733.00 677.20,739.67 677.50,744.00 C677.80,748.33 677.22,751.33 676.80,755.00 C676.38,758.67 676.47,760.50 675.00,766.00 C673.53,771.50 671.00,780.25 668.00,788.00 C665.00,795.75 660.92,804.50 657.00,812.50 C653.08,820.50 648.67,829.42 644.50,836.00 C640.33,842.58 637.18,846.83 632.00,852.00 C626.82,857.17 621.73,862.75 613.40,867.00 C605.07,871.25 592.57,875.13 582.00,877.50 C571.43,879.87 558.92,880.78 550.00,881.20 C541.08,881.62 537.83,881.37 528.50,880.00 C519.17,878.63 503.47,876.25 494.00,873.00 C484.53,869.75 478.20,866.50 471.70,860.50 C465.20,854.50 459.85,845.58 455.00,837.00 C450.15,828.42 446.52,819.40 442.60,809.00 C438.68,798.60 434.00,782.77 431.50,774.60 C429.00,766.43 428.43,765.10 427.60,760.00 C426.77,754.90 426.73,749.17 426.50,744.00 C426.27,738.83 426.02,733.83 426.20,729.00 C426.38,724.17 426.75,718.57 427.60,715.00Z" fill="none" stroke="#b82a28" stroke-opacity="0.6" stroke-width="1.6"/>
</g>
<text x="0" y="0" font-family="Liberation Sans" font-weight="bold" font-size="8" textLength="57" lengthAdjust="spacingAndGlyphs" fill="#ffffff" fill-opacity="0.27" transform="translate(451.5,708) rotate(-11)">PRIZM</text>
<g transform="translate(1445,0) scale(-1,1)">
 <path d="M427.60,715.00 C428.45,711.43 429.30,709.90 431.30,707.60 C433.30,705.30 436.67,702.97 439.60,701.20 C442.53,699.43 444.28,698.38 448.90,697.00 C453.52,695.62 462.12,693.98 467.30,692.90 C472.48,691.82 474.55,691.32 480.00,690.50 C485.45,689.68 490.67,688.62 500.00,688.00 C509.33,687.38 525.17,686.93 536.00,686.80 C546.83,686.67 555.23,686.85 565.00,687.20 C574.77,687.55 586.27,688.00 594.60,688.90 C602.93,689.80 608.60,691.17 615.00,692.60 C621.40,694.03 627.17,695.60 633.00,697.50 C638.83,699.40 645.10,701.58 650.00,704.00 C654.90,706.42 659.07,709.33 662.40,712.00 C665.73,714.67 667.90,717.17 670.00,720.00 C672.10,722.83 673.75,725.00 675.00,729.00 C676.25,733.00 677.20,739.67 677.50,744.00 C677.80,748.33 677.22,751.33 676.80,755.00 C676.38,758.67 676.47,760.50 675.00,766.00 C673.53,771.50 671.00,780.25 668.00,788.00 C665.00,795.75 660.92,804.50 657.00,812.50 C653.08,820.50 648.67,829.42 644.50,836.00 C640.33,842.58 637.18,846.83 632.00,852.00 C626.82,857.17 621.73,862.75 613.40,867.00 C605.07,871.25 592.57,875.13 582.00,877.50 C571.43,879.87 558.92,880.78 550.00,881.20 C541.08,881.62 537.83,881.37 528.50,880.00 C519.17,878.63 503.47,876.25 494.00,873.00 C484.53,869.75 478.20,866.50 471.70,860.50 C465.20,854.50 459.85,845.58 455.00,837.00 C450.15,828.42 446.52,819.40 442.60,809.00 C438.68,798.60 434.00,782.77 431.50,774.60 C429.00,766.43 428.43,765.10 427.60,760.00 C426.77,754.90 426.73,749.17 426.50,744.00 C426.27,738.83 426.02,733.83 426.20,729.00 C426.38,724.17 426.75,718.57 427.60,715.00Z" fill="url(#gBase)"/>
 <g clip-path="url(#clL)">
  <rect x="420" y="780" width="130" height="110" fill="url(#gBot)"/>
  <path d="M524,776 L470,900 L552,900Z" fill="#f07a70" fill-opacity="0.16" filter="url(#blur2)"/>
  <path d="M524,776 L420,800 L420,840Z" fill="#f07a70" fill-opacity="0.08" filter="url(#blur2)"/>
  <path d="M528,680 C528,710 529,745 529.8,777 C530,800 531.5,815 533.5,825 C535.5,845 538,862 543,890 L700,890 L700,680Z" fill="url(#gDark)"/>
  <path d="M608,684 C609,720 611.5,770 613.7,798 C614.5,812 615,822 617.3,826.5 C619,828 622,828.2 626,828.4 L649,829.6 L700,833 L700,684Z" fill="url(#gLight)"/>
  <path d="M420,690 L476.7,688 C482,694 490,700 496,708 C505,719 513,733 519,745 C524,755 528,764 529.5,772 C529.5,774 528,775 526,775 L517,774 C514.5,773.5 512,770 510,765 C506,755 501,745 495,735 C488,724 478,713 467,707.5 C459,703.5 450,703 443,705 C440.5,712 439.5,730 437.5,746 C436.5,749.5 433,751 428,751.5 L420,752Z" fill="url(#gTemple)" fill-opacity="0.62"/>
  <path d="M420,690 L452,690 C447,697 442,702 440.5,707 C439.5,716 439,732 438.5,748 C438,751 435,752.5 431,752.5 L420,752Z" fill="#e8620e" fill-opacity="0.85"/>
 </g>
 <path d="M427.60,715.00 C428.45,711.43 429.30,709.90 431.30,707.60 C433.30,705.30 436.67,702.97 439.60,701.20 C442.53,699.43 444.28,698.38 448.90,697.00 C453.52,695.62 462.12,693.98 467.30,692.90 C472.48,691.82 474.55,691.32 480.00,690.50 C485.45,689.68 490.67,688.62 500.00,688.00 C509.33,687.38 525.17,686.93 536.00,686.80 C546.83,686.67 555.23,686.85 565.00,687.20 C574.77,687.55 586.27,688.00 594.60,688.90 C602.93,689.80 608.60,691.17 615.00,692.60 C621.40,694.03 627.17,695.60 633.00,697.50 C638.83,699.40 645.10,701.58 650.00,704.00 C654.90,706.42 659.07,709.33 662.40,712.00 C665.73,714.67 667.90,717.17 670.00,720.00 C672.10,722.83 673.75,725.00 675.00,729.00 C676.25,733.00 677.20,739.67 677.50,744.00 C677.80,748.33 677.22,751.33 676.80,755.00 C676.38,758.67 676.47,760.50 675.00,766.00 C673.53,771.50 671.00,780.25 668.00,788.00 C665.00,795.75 660.92,804.50 657.00,812.50 C653.08,820.50 648.67,829.42 644.50,836.00 C640.33,842.58 637.18,846.83 632.00,852.00 C626.82,857.17 621.73,862.75 613.40,867.00 C605.07,871.25 592.57,875.13 582.00,877.50 C571.43,879.87 558.92,880.78 550.00,881.20 C541.08,881.62 537.83,881.37 528.50,880.00 C519.17,878.63 503.47,876.25 494.00,873.00 C484.53,869.75 478.20,866.50 471.70,860.50 C465.20,854.50 459.85,845.58 455.00,837.00 C450.15,828.42 446.52,819.40 442.60,809.00 C438.68,798.60 434.00,782.77 431.50,774.60 C429.00,766.43 428.43,765.10 427.60,760.00 C426.77,754.90 426.73,749.17 426.50,744.00 C426.27,738.83 426.02,733.83 426.20,729.00 C426.38,724.17 426.75,718.57 427.60,715.00Z" fill="none" stroke="#b82a28" stroke-opacity="0.6" stroke-width="1.6"/>
</g>
<g clip-path="url(#clRR)">
 <path d="M991.5,696 C995,730 998.5,780 1000.5,830 L997.5,830 C995.5,780 992,730 989,696Z" fill="#e23e30" fill-opacity="0.45"/>
</g>
<path d="M385.6,690 L385.9,708" stroke="#b8f5e6" stroke-width="1.6" stroke-opacity="0.8"/>
<path d="M1059.4,690 L1059.1,708" stroke="#b8f5e6" stroke-width="1.6" stroke-opacity="0.8"/>
</svg><div id="home"></div>
</body></html>
